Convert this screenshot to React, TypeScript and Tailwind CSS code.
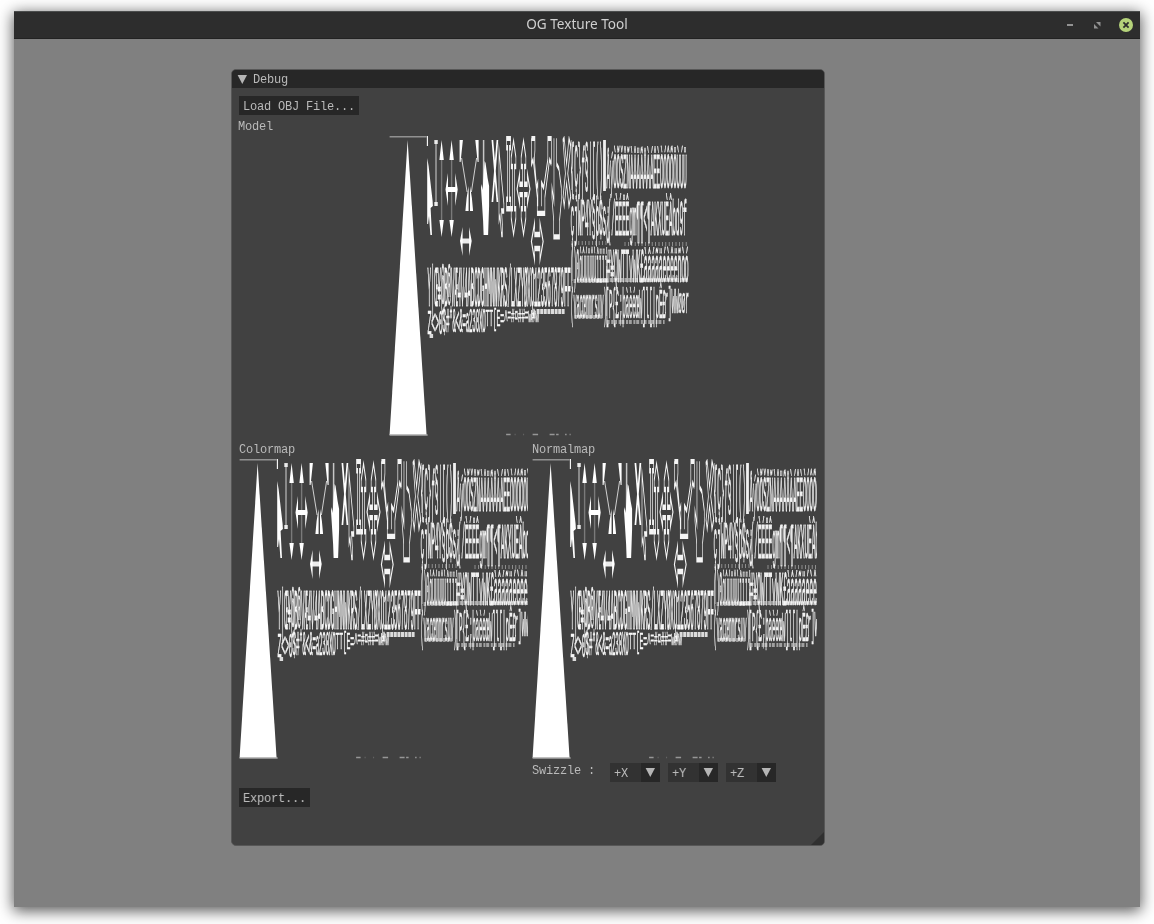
import React from "react";

type GlyphRowProps = { chars: string; x: number; y: number; w: number; h: number };

/* One packed row of the font atlas: narrow glyphs stretched vertically. */
function GlyphRow({ chars, x, y, w, h }: GlyphRowProps) {
  return (
    <text
      transform={`translate(${x} ${y + h}) scale(1 ${h / 4})`}
      fontSize={6}
      textLength={w}
      lengthAdjust="spacingAndGlyphs"
      fill="#fff"
      stroke="#fff"
      strokeWidth={0.1}
      fontFamily="'Liberation Mono', monospace"
    >
      {chars}
    </text>
  );
}

function FontAtlas() {
  return (
    <svg width="301" height="300" viewBox="-0.6 0 301 300" className="block shrink-0">
      <path d="M0 .7H37" stroke="#919191" strokeWidth="1.4" />
      <path d="M37.8 0V10" stroke="#fff" strokeWidth="1.1" />
      <path d="M18 4L37 299H0Z" fill="#fff" />
      <path d="M0 298.9H38" stroke="#a9aaaa" strokeWidth="1.5" />

      <g fill="#fff">
        <path d="M37.6 22L39 30L43 65L43.3 70L41 72L42.4 99H40.8L39.4 80L38.5 88H37.6Z" />
        <path d="M52 4L54.2 24H49.8ZM52 101L54.2 84H49.8Z" />
        <path d="M62 4L64.2 24H59.8ZM62 101L64.2 84H59.8Z" />
        <path d="M55.9 53.5L58.4 37V70ZM68.1 53.5L65.6 37V70Z" />
        <path d="M70 4H73.3L71 26H70ZM89 4H85.7L88 26H89Z" />
        <path d="M79 50V75H75.8L77 62ZM80.4 50V75H83.5L82.3 62Z" />
        <path d="M70.4 105L73 91V120ZM82.1 105L79.5 91V120Z" />
        <path d="M95 25L96 27L98 42L99.5 50V70L98.5 99H94L93.5 85L91.4 52L92 48L93 54Z" />
      </g>
      <g fill="none" stroke="#fff">
        <path d="M94 4V56" strokeWidth="1.5" opacity=".7" />
        <path d="M44.7 6H48.2M44.7 68H48.2" strokeWidth="4" opacity=".85" />
        <path d="M46.4 5V70" strokeWidth="1.2" opacity=".65" />
        <path d="M52 24V84M62 24V84" strokeWidth="1.4" opacity=".3" />
        <path d="M57 53.5H67" strokeWidth="5" />
        <path d="M72 22L77.5 56M87 22L81.8 56" strokeWidth="1" opacity=".75" />
        <path d="M72 105H81" strokeWidth="5" opacity=".9" />
        <path d="M102.8 4L107.8 66M107.8 4L102.8 66" strokeWidth="1.7" />
      </g>

      {/* Outlined cursors, in atlas pixels */}
      <g transform="scale(.586 4.69)" fill="none" stroke="#fff" strokeWidth="1.15" opacity=".95">
        <path d="M186.7 3V18L188.5 17L191 21H192.5V19L191 16H195V14.5Z" />
        <path d="M199.5 .5H206.5V2.5H204.5V13.5H206.5V15.5H199.5V13.5H201.5V2.5H199.5Z" />
        <path d="M211.5 1L207.5 4.5V6.5H210V15.5H207.5V17.5L211.5 21L215.5 17.5V15.5H213V6.5H215.5V4.5Z" />
        <path d="M228.5 1L224.5 4.5V6.5H227V10.3H222V8L217.5 11.3L222 14.5V12.5H227V15.5H224.5V17.5L228.5 21L232.5 17.5V15.5H230V12.5H235V14.5L239.5 11.3L235 8V10.3H230V6.5H232.5V4.5Z" />
        <path d="M242 .5H248V3L247 5L251 11L253 10V15M276 6V.5H270V5L263 11L259 10V15M242 .5V6L245 5L252 13V16.5H265V13L273 5L276 6" strokeWidth="1.1" />
        <path d="M242 22.5L247.5 18.5V21H256.5V18.5L262 22.5L256.5 26.5V24H247.5V26.5Z" />
        <path d="M280.5 .5V14L277 11V13L280 18V21.5H290V18L293 14V11L289 7L285 6V.5" strokeWidth="1.1" />
        <path d="M296 1L300 8L296 13L298 15L302 10L306 15L309 13L304 8L309 2L306 .5L302 6L298 .5Z" strokeWidth="1.1" />
      </g>

      <g opacity=".96">
        <GlyphRow chars="Y|Œ¥@B®VÆ4V4ABCDGHMNWKRS/LXZYØXQ123567879FF" x={38} y={132} w={143} h={38} />
        <GlyphRow chars="Z<>0" x={38} y={174} w={15} h={24} />
        <GlyphRow chars="$#*&<&=a230XO" x={53} y={173} w={43} h={23} />
        <GlyphRow chars="TT[E=^" x={96} y={174} w={22} h={16} />
        <GlyphRow chars="=#¤##=w#w" x={118} y={173} w={31} h={13} />
      </g>
      <g stroke="#dcdcdc">
        <path d="M142 174V184M145 174V182" strokeWidth="1" />
        <path d="M147 175.5H175" strokeWidth="5" strokeDasharray="3 .6" />
        <path d="M40 200H43.5" strokeWidth="4" />
      </g>

      <g opacity=".93">
        <GlyphRow chars="{Ç}ƒ§|[()" x={181} y={9} w={32} h={41} />
        <path d="M213.5 4H216.3V55H213.5Z" fill="#fff" />
        <GlyphRow chars="ÅýÒÕŠŽÑÀÂÄÃÅÀÁÊÈÒÓÔÕÖÙÚÜ" x={217} y={19} w={80} h={33} />
        <GlyphRow chars="çjWP4Y§þ$s¿" x={181} y={63} w={39} h={36} />
        <GlyphRow chars="(/ÈÉËÊgm¶¶<¶AKXUÈÂbd9f" x={218} y={66} w={79} h={33} />
        <GlyphRow chars="()0òûúüûùîïïí" x={181} y={114} w={37} h={32} />
        <GlyphRow chars="#¥QWTTvWK£àâáãäéèêëñòó" x={217} y={114} w={82} h={32} />
        <GlyphRow chars="(vacœnmrsuv)" x={181} y={154} w={36} h={28} />
        <GlyphRow chars="[P{£;þàèéœW]l[|pÊ£" x={216} y={154} w={60} h={28} />
        <GlyphRow chars="r]WWøør" x={275} y={152} w={24} h={25} />
      </g>
      <g stroke="#fff" fill="none" opacity=".5">
        <path d="M184 145H213M220 144H298M185 181H212" strokeWidth="4" strokeDasharray="2.5 1.2" />
        <path d="M217 186H275" strokeWidth="4" strokeDasharray="3 1.6 2 .8" />
        <path d="M182 107H217M235 108H298" strokeWidth="4" strokeDasharray=".8 2.6" />
        <path d="M182 4V54M217 130V180M183 109V145" strokeWidth=".8" />
      </g>
      <path d="M116.5 298.5H121M143 298.5H148.5M160 298.5H165M166.5 298.5H169M175.5 298.5H177M180 298.5H181" stroke="#969696" strokeWidth="1.5" />
      <path d="M125 298.5H126M133.5 298.5H134.5" stroke="#666" strokeWidth="1.5" />
    </svg>
  );
}

const monoText =
  "font-['Liberation_Mono',monospace] text-[12px] leading-[13px] tracking-[-0.2px] text-[#bababa] whitespace-pre";

function Arrow() {
  return (
    <svg width="10" height="9" viewBox="0 0 10 9" className="block shrink-0">
      <path d="M.6 0H10L5.3 9Z" fill="#b5b5b5" />
    </svg>
  );
}

function ToolButton({ children }: { children: React.ReactNode }) {
  return (
    <button className="flex h-[19px] w-fit items-start bg-[#272727] px-1 pt-[5px] text-left">{children}</button>
  );
}

function AxisSelect({ label }: { label: string }) {
  return (
    <button className="flex h-[19px] w-[50px] bg-[#323232]">
      <span className="flex h-full flex-1 items-start pt-[5px] pl-1">{label}</span>
      <span className="flex h-full w-[19px] items-center justify-center bg-[#272727] pr-px">
        <Arrow />
      </span>
    </button>
  );
}

export default function App() {
  return (
    <div className="h-[924px] w-[1154px] overflow-hidden bg-white pt-[11px] pl-[14px]">
      <div className="flex h-[896px] w-[1126px] flex-col bg-[#808080] shadow-[0_3px_14px_1px_rgba(0,0,0,0.65)]">
        <header className="grid h-7 shrink-0 grid-cols-[1fr_auto_1fr] items-center border-t border-b border-t-[#4b4d4d] border-b-[#222] bg-[#2d2d2d]">
          <span />
          <h1 className="pb-[2px] font-['Noto_Sans',sans-serif] text-[13.6px] leading-6 text-[#cfcfcf] grayscale">OG Texture Tool</h1>
          <div className="flex items-center justify-end pr-[7px]">
            <svg width="6" height="2" className="mr-[21px]">
              <path d="M0 0H6V2H0Z" fill="#929292" />
            </svg>
            <svg width="7" height="7" viewBox="0 0 7 7" className="mr-[18px]">
              <path d="M2 0H6.5V4.5ZM0 2L4.5 6.5H0Z" fill="#929292" />
            </svg>
            <svg width="14" height="14" viewBox="0 0 14 14">
              <circle cx="7" cy="7" r="7" fill="#b5d37a" />
              <path d="M4.4 4.4L9.6 9.6M9.6 4.4L4.4 9.6" stroke="#2d2d2d" strokeWidth="1.8" />
            </svg>
          </div>
        </header>

        <main className="pt-[30px] pl-[217px]">
          <section
            className={`relative flex h-[777px] w-[594px] flex-col overflow-hidden rounded-[5px] border border-[#57575b] bg-[#414141] grayscale ${monoText}`}
          >
            <div className="flex h-[18px] shrink-0 items-center gap-[6px] bg-[#272727] pl-[5px]">
              <Arrow />
              <span className="pt-[2px]">Debug</span>
            </div>
            <div className="flex flex-col pt-2 pl-[7px]">
              <ToolButton>Load OBJ File...</ToolButton>
              <div className="mt-1 -ml-px h-[13px] pt-[2px]">Model</div>
              <div className="mt-1 ml-[150px]">
                <FontAtlas />
              </div>
              <div className="mt-[7px] flex gap-[4px]">
                <div className="w-[289px]">
                  <div className="h-4 pt-px">Colormap</div>
                  <div className="overflow-hidden">
                    <FontAtlas />
                  </div>
                </div>
                <div className="w-[285px]">
                  <div className="h-4 pt-px">Normalmap</div>
                  <div className="overflow-hidden">
                    <FontAtlas />
                  </div>
                  <div className="mt-1 flex gap-2">
                    <span className="w-[70px] pt-[2px]">Swizzle :</span>
                    <AxisSelect label="+X" />
                    <AxisSelect label="+Y" />
                    <AxisSelect label="+Z" />
                  </div>
                </div>
              </div>
              <div className="mt-[6px]">
                <ToolButton>Export...</ToolButton>
              </div>
            </div>
            <svg width="13" height="13" viewBox="0 0 13 13" className="absolute right-0 bottom-0">
              <path d="M13 0V13H0Z" fill="#303030" />
            </svg>
          </section>
        </main>
      </div>
    </div>
  );
}
